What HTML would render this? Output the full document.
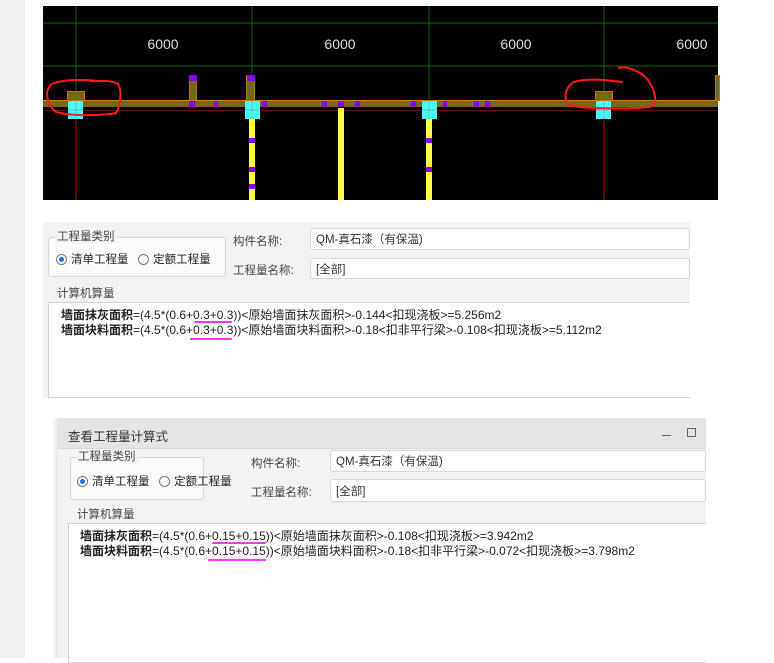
<!DOCTYPE html>
<html><head><meta charset="utf-8"><style>
*{margin:0;padding:0;box-sizing:border-box}
body{width:774px;height:658px;background:#fff;position:relative;overflow:hidden;font-family:"Liberation Sans","Noto Sans CJK SC",sans-serif;font-size:11px;color:#222}
.abs{position:absolute}
.strip{left:0;top:0;width:25px;height:658px;background:#f0f1f3}
.panel{background:#f3f3f3}
.gb{border:1px solid #d6d6d6;border-radius:3px;background:#fbfbfb}
.lbl{background:#f3f3f3;padding:0 2px;color:#444;line-height:12px}
.tb{background:#fff;border:1px solid #d8d8d8;border-radius:3px;padding-left:5px;display:flex;align-items:center;color:#333;font-size:11.5px}
.radio{display:inline-block;width:11px;height:11px;border:1px solid #777;border-radius:50%;background:#fff;vertical-align:-2px;margin-right:4px;position:relative}
.radio.on::after{content:"";position:absolute;left:2px;top:2px;width:5px;height:5px;border-radius:50%;background:#1a73e8}
.calc{background:#fff;border:1px solid #d4d4d4;border-right:none}
.ln{white-space:nowrap;line-height:15px;font-size:12px;color:#222}
.ln b{font-weight:bold}
.pk{position:absolute;height:2px;background:#ff33ff;border-radius:1px}
</style></head><body>
<div class="abs strip"></div>

<svg class="abs" style="left:0;top:0" width="774" height="205">
<rect x="43" y="6" width="675" height="194" fill="#000"/>
<line x1="43" y1="23" x2="718" y2="23" stroke="#0a6b0a"/>
<line x1="43" y1="66" x2="718" y2="66" stroke="#0a6b0a"/>
<g stroke="#0a6b0a"><line x1="76" y1="6" x2="76" y2="100"/><line x1="252" y1="6" x2="252" y2="100"/><line x1="429" y1="6" x2="429" y2="100"/><line x1="604" y1="6" x2="604" y2="100"/></g>
<g stroke="#b00" ><line x1="76" y1="108" x2="76" y2="200"/><line x1="604" y1="108" x2="604" y2="200"/></g>
<g fill="#ddd" font-size="14" font-family="Liberation Sans" text-anchor="middle"><text x="163" y="49">6000</text><text x="340" y="49">6000</text><text x="516" y="49">6000</text><text x="692" y="49">6000</text></g>
<rect x="43" y="100" width="675" height="7" fill="#6e6a1a"/>
<line x1="43" y1="100.5" x2="718" y2="100.5" stroke="#d87a00"/>
<line x1="43" y1="110.5" x2="718" y2="110.5" stroke="#7a0000"/>
<g fill="#6e6a1a" stroke="#c87000" stroke-width="1"><rect x="67.5" y="91.5" width="17" height="9"/><rect x="595.5" y="91.5" width="17" height="9"/><rect x="189.5" y="75.5" width="7" height="25"/><rect x="246.5" y="75.5" width="8" height="25"/><rect x="715.5" y="75.5" width="4" height="25"/></g>
<g fill="#ffff33"><rect x="249" y="108" width="6" height="92"/><rect x="338" y="108" width="6" height="92"/><rect x="426" y="108" width="6" height="92"/></g>
<g fill="#8a00ff"><rect x="189" y="75" width="8" height="6"/><rect x="247" y="75" width="8" height="6"/><rect x="189" y="101" width="6" height="6"/><rect x="214" y="101" width="4" height="6"/><rect x="262" y="101" width="5" height="6"/><rect x="322" y="101" width="5" height="6"/><rect x="338" y="101" width="6" height="6"/><rect x="355" y="101" width="5" height="6"/><rect x="411" y="101" width="5" height="6"/><rect x="443" y="101" width="4" height="6"/><rect x="474" y="101" width="5" height="6"/><rect x="485" y="101" width="5" height="6"/><rect x="249" y="138" width="6" height="5"/><rect x="249" y="167" width="6" height="5"/><rect x="249" y="184" width="6" height="5"/><rect x="426" y="138" width="6" height="5"/><rect x="426" y="167" width="6" height="5"/></g>
<g fill="#44ffff"><rect x="68" y="101" width="15" height="18"/><rect x="245" y="101" width="15" height="18"/><rect x="422" y="101" width="15" height="18"/><rect x="596" y="101" width="15" height="18"/></g>
<g stroke="#888" stroke-width="0.6"><line x1="68" y1="110" x2="83" y2="110"/><line x1="245" y1="110" x2="260" y2="110"/><line x1="422" y1="110" x2="437" y2="110"/><line x1="596" y1="110" x2="611" y2="110"/><line x1="76" y1="101" x2="76" y2="119"/><line x1="252" y1="101" x2="252" y2="119"/><line x1="429" y1="101" x2="429" y2="119"/><line x1="604" y1="101" x2="604" y2="119"/></g>
<g fill="none" stroke="#ff1a1a" stroke-width="2" stroke-linecap="round">
<path d="M98 81 C80 79 60 80 52 84 C44 90 46 104 56 112 C70 116 100 116 116 113 C121 104 122 90 118 84 C110 80 102 81 90 81"/>
<path d="M619 68 C625 66 640 70 648 80 C656 92 658 104 650 107 C630 109 590 109 572 106 C562 102 564 88 574 82 C586 78 608 80 622 82"/>
</g>
</svg>

<!-- panel 1 -->
<div class="abs panel" style="left:43px;top:222px;width:647px;height:176px"></div>
<div class="abs gb" style="left:48px;top:237px;width:178px;height:40px"></div>
<div class="abs lbl" style="left:55px;top:231px;font-size:11.5px">工程量类别</div>
<div class="abs" style="left:56px;top:251px;font-size:11.5px"><span class="radio on"></span>清单工程量&nbsp;&nbsp;&nbsp;<span class="radio"></span>定额工程量</div>
<div class="abs" style="left:233px;top:233px;color:#444;font-size:11.5px">构件名称:</div>
<div class="abs tb" style="left:310px;top:228px;width:380px;height:22px">QM-真石漆（有保温)</div>
<div class="abs" style="left:233px;top:262px;color:#444;font-size:11.5px">工程量名称:</div>
<div class="abs tb" style="left:310px;top:258px;width:380px;height:21px">[全部]</div>
<div class="abs calc" style="left:48px;top:302px;width:642px;height:96px"></div>
<div class="abs lbl" style="left:55px;top:288px;font-size:11.5px">计算机算量</div>
<div class="abs ln" style="left:61px;top:308px"><b>墙面抹灰面积</b>=(4.5*(0.6+0.3+0.3))&lt;原始墙面抹灰面积&gt;-0.144&lt;扣现浇板&gt;=5.256m2</div>
<div class="abs ln" style="left:61px;top:323px"><b>墙面块料面积</b>=(4.5*(0.6+0.3+0.3))&lt;原始墙面块料面积&gt;-0.18&lt;扣非平行梁&gt;-0.108&lt;扣现浇板&gt;=5.112m2</div>

<!-- panel 2 -->
<div class="abs" style="left:52px;top:418px;width:6px;height:240px;background:linear-gradient(90deg,#fff,#e6e6e6)"></div>
<div class="abs panel" style="left:58px;top:418px;width:648px;height:240px"></div>
<div class="abs" style="left:58px;top:418px;width:648px;height:31px;background:#e4e4e4;border-bottom:1px solid #d8d8d8"></div>
<div class="abs" style="left:68px;top:426px;font-size:12.5px;color:#333">查看工程量计算式</div>
<div class="abs" style="left:662px;top:435px;width:9px;height:1px;background:#666"></div>
<div class="abs" style="left:687px;top:428px;width:9px;height:9px;border:1px solid #666"></div>
<div class="abs gb" style="left:70px;top:457px;width:134px;height:43px"></div>
<div class="abs lbl" style="left:76px;top:451px;font-size:11.5px">工程量类别</div>
<div class="abs" style="left:77px;top:473px;font-size:11.5px"><span class="radio on"></span>清单工程量&nbsp;&nbsp;&nbsp;<span class="radio"></span>定额工程量</div>
<div class="abs" style="left:251px;top:455px;color:#444;font-size:11.5px">构件名称:</div>
<div class="abs tb" style="left:330px;top:450px;width:376px;height:22px">QM-真石漆（有保温)</div>
<div class="abs" style="left:251px;top:484px;color:#444;font-size:11.5px">工程量名称:</div>
<div class="abs tb" style="left:330px;top:479px;width:376px;height:23px">[全部]</div>
<div class="abs calc" style="left:68px;top:523px;width:638px;height:140px"></div>
<div class="abs lbl" style="left:75px;top:509px;font-size:11.5px">计算机算量</div>
<div class="abs ln" style="left:80px;top:529px"><b>墙面抹灰面积</b>=(4.5*(0.6+0.15+0.15))&lt;原始墙面抹灰面积&gt;-0.108&lt;扣现浇板&gt;=3.942m2</div>
<div class="abs ln" style="left:80px;top:544px"><b>墙面块料面积</b>=(4.5*(0.6+0.15+0.15))&lt;原始墙面块料面积&gt;-0.18&lt;扣非平行梁&gt;-0.072&lt;扣现浇板&gt;=3.798m2</div>

<div class="pk" style="left:194px;top:321px;width:38px"></div>
<div class="pk" style="left:190px;top:338px;width:42px"></div>
<div class="pk" style="left:212px;top:542px;width:54px"></div>
<div class="pk" style="left:208px;top:559px;width:58px"></div>
</body></html>
